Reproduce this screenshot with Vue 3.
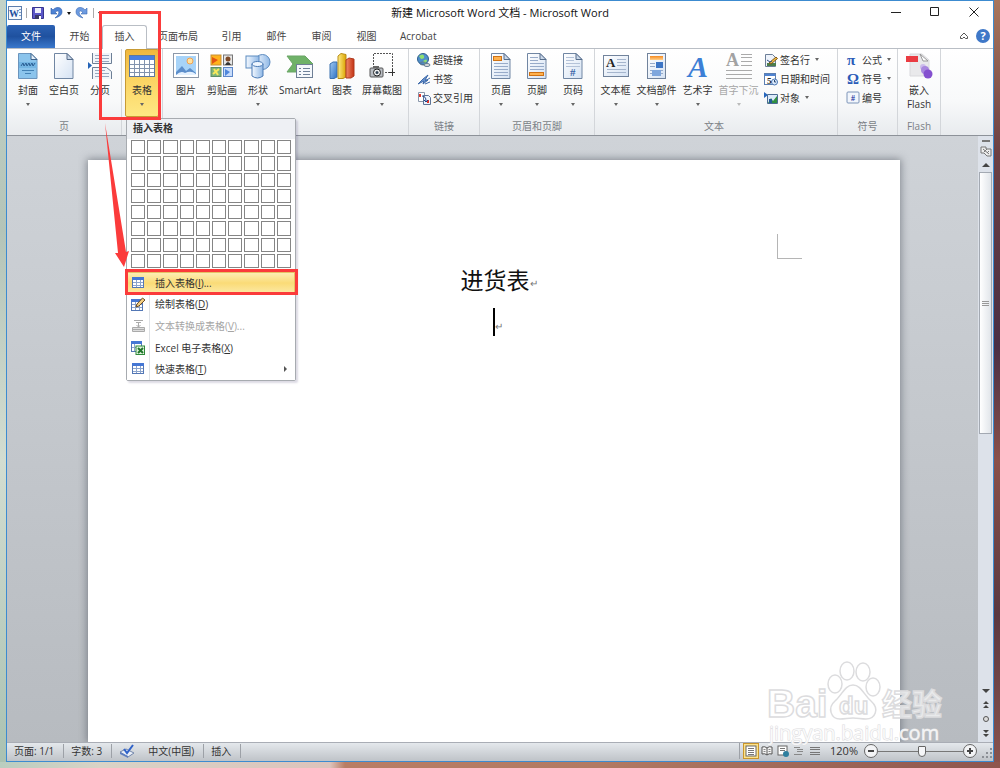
<script setup>
import {ref} from "vue";

const tabs = ['开始', '插入', '页面布局', '引用', '邮件', '审阅', '视图', 'Acrobat']
const active_tab = ref('插入')
const zoom = ref(52)

const groups = [
  {
    id: 'pages', title: '页',
    big: [
      {icon: 'cover', label: '封面', arrow: true},
      {icon: 'page', label: '空白页'},
      {icon: 'break', label: '分页'},
    ],
  },
  {
    id: 'tables', title: '',
    big: [{icon: 'table', label: '表格', arrow: true, open: true}],
  },
  {
    id: 'pictures', title: '插图',
    big: [
      {icon: 'picture', label: '图片'},
      {icon: 'clipart', label: '剪贴画'},
      {icon: 'shapes', label: '形状', arrow: true},
      {icon: 'smartart', label: 'SmartArt', size: 'large'},
      {icon: 'chart', label: '图表'},
      {icon: 'screenshot', label: '屏幕截图', arrow: true, size: 'wide'},
    ],
  },
  {
    id: 'links', title: '链接',
    small: [
      {icon: 'globe', label: '超链接'},
      {icon: 'bookmark', label: '书签'},
      {icon: 'crossref', label: '交叉引用'},
    ],
  },
  {
    id: 'headers', title: '页眉和页脚',
    big: [
      {icon: 'header', label: '页眉', arrow: true},
      {icon: 'footer', label: '页脚', arrow: true},
      {icon: 'pagenum', label: '页码', arrow: true},
    ],
  },
  {
    id: 'text', title: '文本',
    big: [
      {icon: 'textbox', label: '文本框', arrow: true, size: 'wide'},
      {icon: 'parts', label: '文档部件', arrow: true, size: 'wide'},
      {icon: 'wordart', label: '艺术字', arrow: true, size: 'wide'},
      {icon: 'dropcap', label: '首字下沉', arrow: true, size: 'wide', disabled: true},
    ],
    small: [
      {icon: 'sign', label: '签名行', arrow: true},
      {icon: 'date', label: '日期和时间'},
      {icon: 'object', label: '对象', arrow: true},
    ],
  },
  {
    id: 'symbols', title: '符号',
    small: [
      {icon: 'pi', label: '公式', arrow: true},
      {icon: 'omega', label: '符号', arrow: true},
      {icon: 'number', label: '编号'},
    ],
  },
  {
    id: 'flash', title: 'Flash',
    big: [{icon: 'flash', label: '嵌入', second: 'Flash'}],
  },
]

// letters that sit on top of an icon
const glyphs = {
  pagenum: {x: 11, y: 23, text: '#'},
  textbox: {x: 4, y: 14, text: 'A'},
  wordart: {x: 4, y: 24, text: 'A'},
  dropcap: {x: 1, y: 13, text: 'A'},
  date: {x: 3, y: 12, text: '5'},
  pi: {x: 1, y: 12, text: 'π'},
  omega: {x: 1, y: 12, text: 'Ω'},
  number: {x: 5, y: 10, text: '#'},
}

const menu = [
  {icon: 'grid', label: '插入表格', key: 'I', tail: '...', hover: true},
  {icon: 'draw', label: '绘制表格', key: 'D', tail: ''},
  {icon: 'convert', label: '文本转换成表格', key: 'V', tail: '...', disabled: true},
  {icon: 'excel', label: 'Excel 电子表格', key: 'X', tail: ''},
  {icon: 'grid', label: '快速表格', key: 'T', tail: '', sub: true},
]

const views = [
  {icon: 'v-print', label: '页面视图'},
  {icon: 'v-read', label: '阅读版式'},
  {icon: 'v-web', label: 'Web 版式'},
  {icon: 'v-outline', label: '大纲'},
  {icon: 'v-draft', label: '草稿'},
]
</script>

<template>
  <div class="desktop">
    <!-- icon sprite -->
    <svg class="sprite" aria-hidden="true">
      <defs>
        <linearGradient id="g-page" x1="0" y1="0" x2="1" y2="1">
          <stop offset="0" stop-color="#fff"/><stop offset="1" stop-color="#d5e2f3"/>
        </linearGradient>
        <linearGradient id="g-blue" x1="0" y1="0" x2="1" y2="1">
          <stop offset="0" stop-color="#9fc8f2"/><stop offset="1" stop-color="#2f72c4"/>
        </linearGradient>
        <linearGradient id="g-orange" x1="0" y1="0" x2="0" y2="1">
          <stop offset="0" stop-color="#f58a1f"/><stop offset="1" stop-color="#ffd08a"/>
        </linearGradient>
        <linearGradient id="g-shape" x1="0" y1="0" x2="1" y2="0">
          <stop offset="0" stop-color="#f4f9ff"/><stop offset="1" stop-color="#8fb8e6"/>
        </linearGradient>
        <linearGradient id="g-red" x1="0" y1="0" x2="1" y2="0">
          <stop offset="0" stop-color="#f08a68"/><stop offset="1" stop-color="#c33214"/>
        </linearGradient>
        <linearGradient id="g-yellow" x1="0" y1="0" x2="1" y2="0">
          <stop offset="0" stop-color="#fdeb86"/><stop offset="1" stop-color="#dba400"/>
        </linearGradient>
      </defs>
      <symbol id="page" viewBox="0 0 26 26">
        <path d="M3.500.5h12.500l6 6v19h-18.500z" fill="url(#g-page)" stroke="#7086a3"/>
        <path d="M16 .5v6h6z" fill="#c9d7e8" stroke="#566d8b"/>
      </symbol>
      <symbol id="cover" viewBox="0 0 26 26">
        <path d="M3.500.5h12.500l6 6v19h-18.500z" fill="#8bc4ec" stroke="#6a94bd"/>
        <path d="M16 .5v6h6z" fill="#e3f0fb" stroke="#3f6289"/>
        <path d="M4 9h18v6H4z" fill="#74b5e3"/>
        <path d="M6 13l2-3 1 3 2-3 1 3 2-3 1 3 2-3 1 3 2-3" stroke="#2b5f95" fill="none"/>
        <path d="M7 17.500h12M10 20.500h6" stroke="#4482b5"/>
      </symbol>
      <symbol id="break" viewBox="0 0 26 26">
        <path d="M5.500 0v10.500h19V0" fill="#f1f5fa" stroke="#6d7f96"/>
        <path d="M5.500 26V14.500h14l5 4V26" fill="#f1f5fa" stroke="#6d7f96"/>
        <path d="M8 2.500h14M8 5.500h14M8 8.500h14M8 17.500h10M8 20.500h14M8 23.500h14" stroke="#98a8bf"/>
        <path d="M1 9l4 3.500L1 16z" fill="#2464b8"/>
      </symbol>
      <symbol id="table" viewBox="0 0 26 26">
        <rect x=".5" y="2.500" width="25" height="21" fill="#fff" stroke="#5d789e"/>
        <rect x="1" y="3" width="24" height="4" fill="#4a7fe0"/>
        <path d="M1 11.500h24M1 15.500h24M1 19.500h24M5.500 7v16M10.500 7v16M15.500 7v16M20.500 7v16" stroke="#8293ae"/>
      </symbol>
      <symbol id="picture" viewBox="0 0 26 26">
        <rect x=".5" y=".5" width="25" height="24" fill="#fff" stroke="#8c98a9"/>
        <rect x="3" y="3" width="20" height="19" fill="#a7d3f8"/>
        <circle cx="17" cy="8" r="3" fill="#ffe2a0" stroke="#f0a250"/>
        <path d="M3 19l6-6 4 5 4-3 6 5v2H3z" fill="#5c8ecb"/>
        <path d="M3 22q5-5 9-2 6-3 11 1v1z" fill="#e4f1ff"/>
      </symbol>
      <symbol id="clipart" viewBox="0 0 26 26">
        <rect x="2" y="2" width="10" height="10" fill="#ffb21c" stroke="#c58f36"/>
        <path d="M3 4l6 3-6 4z" fill="#e25513"/>
        <rect x="14.500" y="2" width="9" height="10" fill="#e6e6e6" stroke="#777"/>
        <circle cx="19" cy="6" r="2.500" fill="#7f4a28"/><path d="M16 12q3-6 6 0" fill="#333"/>
        <rect x="2" y="14.500" width="10" height="9" fill="#7fb47a" stroke="#5d8c65"/>
        <path d="M4 21l6-5M5 16l4 6" stroke="#f8e85a" stroke-width="2"/>
        <rect x="14.500" y="14.500" width="9" height="9" fill="#c7dcfa" stroke="#5c86c9"/>
        <path d="M16 16l5 3-5 4z" fill="#4f86dc"/>
      </symbol>
      <symbol id="shapes" viewBox="0 0 26 26">
        <circle cx="17.500" cy="9" r="7.500" fill="url(#g-shape)" stroke="#5d8bc0"/>
        <rect x="1" y="3" width="13" height="12" fill="url(#g-shape)" stroke="#5d8bc0"/>
        <path d="M7 11v12q5.500 4 11 0V11" fill="url(#g-shape)" stroke="#4a7ab5"/>
        <ellipse cx="12.500" cy="11" rx="5.500" ry="2.500" fill="#eef6ff" stroke="#4a7ab5"/>
      </symbol>
      <symbol id="smartart" viewBox="0 0 28 26">
        <path d="M1 3h18l8 8-8 8H1l6-8z" fill="#6fb268" stroke="#6aa566"/>
        <rect x="10.500" y="11.500" width="16" height="13" fill="#f5f8fc" stroke="#6e7f95"/>
        <path d="M13 15.500h2M17 15.500h7M13 18.500h2M17 18.500h7M13 21.500h2M17 21.500h7" stroke="#6f8199"/>
      </symbol>
      <symbol id="chart" viewBox="0 0 26 26">
        <path d="M1 11l3-2h4v15l-3 1.500H1z" fill="url(#g-blue)" stroke="#3a70ae"/>
        <path d="M9 3l3-2.500 5 1V24l-3 1.500H9z" fill="url(#g-yellow)" stroke="#b98d16"/>
        <path d="M17 7l3-2 5 1v17l-3 2h-5z" fill="url(#g-red)" stroke="#b03a1e"/>
      </symbol>
      <symbol id="screenshot" viewBox="0 0 26 26">
        <path d="M4.500 12V.5h19v18M16 19.500h5" stroke="#555" fill="none" stroke-dasharray="2 1"/>
        <path d="M20 19.500h6M23.500 16v7" stroke="#333"/>
        <rect x="1" y="15" width="13" height="9" rx="1" fill="#b9bdc3" stroke="#555"/>
        <rect x="4" y="13" width="6" height="2" fill="#666"/>
        <circle cx="8" cy="19.500" r="3.500" fill="#eee" stroke="#222"/><circle cx="8" cy="19.500" r="1.500" fill="#345"/>
      </symbol>
      <symbol id="header" viewBox="0 0 26 26">
        <use href="#page"/>
        <rect x="5.500" y="3.500" width="8" height="4" fill="#ffb14e" stroke="#cf7215"/>
        <path d="M6 10.500h14M6 13.500h14M6 16.500h14M6 19.500h14M6 22.500h14" stroke="#98abc9"/>
      </symbol>
      <symbol id="footer" viewBox="0 0 26 26">
        <use href="#page"/>
        <path d="M6 4.500h8M6 7.500h8M6 10.500h14M6 13.500h14M6 16.500h14" stroke="#98abc9"/>
        <rect x="5.500" y="19.500" width="14" height="3" fill="#ffb14e" stroke="#cf7215"/>
      </symbol>
      <symbol id="pagenum" viewBox="0 0 26 26">
        <use href="#page"/>
        <path d="M6 4.500h8M6 7.500h8M6 10.500h14M6 13.500h14" stroke="#b4c2d8"/>
      </symbol>
      <symbol id="textbox" viewBox="0 0 26 26">
        <rect x=".5" y="2.500" width="25" height="21" fill="url(#g-page)" stroke="#71839c"/>
        <path d="M14 6.500h9M14 9.500h9M14 12.500h9M4 16.500h19M4 19.500h19" stroke="#a5b5cd"/>
      </symbol>
      <symbol id="parts" viewBox="0 0 26 26">
        <rect x="3.500" y=".5" width="18" height="25" fill="url(#g-page)" stroke="#71839c"/>
        <rect x="6" y="3" width="13" height="4" fill="url(#g-orange)"/>
        <path d="M6 10.500h5M6 13.500h5M6 17.500h13M6 20.500h13" stroke="#98abc9"/>
        <rect x="12" y="9" width="7" height="6" fill="#3d75c5"/>
        <rect x="8" y="17" width="9" height="6" fill="#7fa7dd"/>
      </symbol>
      <symbol id="dropcap" viewBox="0 0 26 26">
        <path d="M15 1.500h11M15 4.500h11M15 8.500h11M15 12.500h11M0 17.500h26M0 21.500h26M0 25.500h26" stroke="#aaa"/>
      </symbol>
      <symbol id="flash" viewBox="0 0 28 26">
        <path d="M5 1h12l7 6v16H5z" fill="#e9e9eb" stroke="#d9d9dc"/>
        <path d="M15 1l8 7h-5z" fill="#fff" stroke="#999"/>
        <rect x="1" y="3" width="12" height="6" fill="#ea3c42"/>
        <circle cx="18" cy="14" r="3" fill="#cdbcec"/><circle cx="20" cy="17" r="4" fill="#a887de"/>
        <circle cx="23" cy="21" r="4.500" fill="#8450cf"/>
      </symbol>

      <symbol id="globe" viewBox="0 0 14 14">
        <circle cx="6" cy="6" r="5.500" fill="#4f8fcb" stroke="#2e5f8e"/>
        <path d="M2 3q4-3 5 0t-3 3zM6 8q4-3 4 0l-2 3z" fill="#8fe070"/>
        <ellipse cx="6" cy="10.500" rx="3" ry="1.500" fill="none" stroke="#617991"/>
        <ellipse cx="10" cy="12" rx="3" ry="1.500" fill="#ddd" stroke="#617991"/>
      </symbol>
      <symbol id="bookmark" viewBox="0 0 14 14">
        <path d="M1 12l5-5 5-4-3 5h3l-5 4 1-3z" fill="#6b95d0" stroke="#3c68a8"/>
        <path d="M8 9l5-3M8 12l5-2" stroke="#3c68a8"/>
      </symbol>
      <symbol id="crossref" viewBox="0 0 14 14">
        <path d="M1.500 1.500h6v9h-6z" fill="#fff" stroke="#8a97aa"/>
        <path d="M6.500 4.500h5l2 2v7h-7z" fill="#eef3fb" stroke="#5d7496"/>
        <path d="M3 3v3M11 9v3" stroke="#e0362b" stroke-width="2"/>
        <path d="M5 5q4 0 4 5M7 9l2 2 2-2" stroke="#1d3f86" fill="none"/>
      </symbol>
      <symbol id="sign" viewBox="0 0 14 14">
        <path d="M1.500 1.500h7l3 3v9h-10z" fill="#eef3fb" stroke="#6c7f98"/>
        <path d="M3 10h9v3H3z" fill="#4b7d4c"/>
        <path d="M5 10l7-6 1.500 1.500L7 11z" fill="#f2bd45" stroke="#80581a"/>
        <path d="M3 7l3 2 2-1" stroke="#2c4f8a" fill="none"/>
      </symbol>
      <symbol id="date" viewBox="0 0 14 14">
        <rect x=".5" y="1.500" width="11" height="11" fill="#fff" stroke="#5c7fb2"/>
        <path d="M1 2h10v2H1z" fill="#4f83d1"/>
        <circle cx="10.500" cy="10" r="3" fill="#dceafb" stroke="#4a76b3"/><path d="M10.500 8v2h1.500" stroke="#26466f" fill="none"/>
      </symbol>
      <symbol id="object" viewBox="0 0 14 14">
        <path d="M0 1l4 3-4 3z" fill="#2767bd"/>
        <path d="M3.500 3.500h10v9h-10z" fill="#dceafb" stroke="#4c6c93"/>
        <path d="M4 12l3-5 2 3 4-5v7z" fill="#2f8f41"/><path d="M5 8h3v4H5z" fill="#245b96"/>
      </symbol>
      <symbol id="number" viewBox="0 0 14 14">
        <rect x="1" y="1" width="12" height="11" rx="1" fill="#f2f6fc" stroke="#7d94b8"/>
      </symbol>

      <symbol id="grid" viewBox="0 0 14 14">
        <rect x="1.500" y="1.500" width="11" height="10" fill="#fff" stroke="#5377b5"/>
        <path d="M1 1h12v3H1z" fill="#4577d4"/>
        <path d="M2 6.500h10M2 9.500h10M5.500 4v7M9.500 4v7" stroke="#8ba4cc"/>
      </symbol>
      <symbol id="draw" viewBox="0 0 14 14">
        <rect x=".5" y="2.500" width="11" height="11" fill="#fff" stroke="#5377b5"/>
        <path d="M0 2h12v3H0z" fill="#4577d4"/>
        <path d="M1 7.500h10M1 10.500h10M4.500 5v8M8.500 5v8" stroke="#8ba4cc"/>
        <path d="M5 10l1-3 5.500-6L14 3l-6 6z" fill="#f4cf82" stroke="#6b4c26"/>
      </symbol>
      <symbol id="convert" viewBox="0 0 14 14">
        <path d="M3 1.500h9M5 3.500h5M7.500 4v4M5.500 6l2 2 2-2" stroke="#aaa" fill="none"/>
        <path d="M1.500 8.500h12v4h-12zM1 10.500h12" stroke="#aaa" fill="#ddd"/>
      </symbol>
      <symbol id="excel" viewBox="0 0 14 14">
        <rect x=".5" y=".5" width="10" height="10" fill="#fff" stroke="#5377b5"/>
        <path d="M0 0h11v3H0z" fill="#4577d4"/><path d="M3.500 3v7M1 6.500h9" stroke="#8ba4cc"/>
        <rect x="5" y="5" width="8.500" height="8.500" fill="#e3f4e0" stroke="#2f8a3a"/>
        <path d="M7 7l5 5M12 7l-5 5" stroke="#20762b" stroke-width="2"/>
      </symbol>

      <symbol id="save" viewBox="0 0 14 14">
        <path d="M1.500 1.500h11v11h-11z" fill="#5b57c8" stroke="#37358f"/>
        <path d="M4 2h6v5H4z" fill="#eef0fb"/><path d="M4 9h6v4H4z" fill="#3a3a66"/><path d="M8 10h2v3H8z" fill="#fff"/>
      </symbol>
      <symbol id="undo" viewBox="0 0 14 14">
        <path d="M2 2v6h6L6 6q3-2 4 0 0 3-4 6 7-2 7-6 0-5-5-4.500Q5 2 4 4z" fill="#4d82d4" stroke="#2d5ca8" stroke-width=".6"/>
      </symbol>
      <symbol id="redo" viewBox="0 0 14 14">
        <path d="M12 2v6H6l2-2q-3-2-4 0 0 3 4 6-7-2-7-6 0-5 5-4.500Q9 2 10 4z" fill="#6d9be0" stroke="#3a69b3" stroke-width=".6"/>
      </symbol>
      <symbol id="proof" viewBox="0 0 16 14">
        <path d="M1 8l6-3 8 4-6 4z" fill="#e9eef7" stroke="#7286ab"/><path d="M1 8l8 4v2L1 10z" fill="#5f7fbf"/>
        <path d="M5 5l3 4 6-8" stroke="#2f62c9" stroke-width="2" fill="none"/>
      </symbol>
      <symbol id="v-print" viewBox="0 0 12 12">
        <rect x="1" y="1" width="10" height="10" fill="#fff" stroke="#666"/><path d="M3 3.500h6M3 5.500h6M3 7.500h6M3 9.500h6" stroke="#777"/>
      </symbol>
      <symbol id="v-read" viewBox="0 0 12 12">
        <path d="M1 2q3-1 5 1 2-2 5-1v7q-3-1-5 1-2-2-5-1zM6 3v7" fill="#f5f5f5" stroke="#555"/>
        <path d="M2.500 4.500h2M2.500 6.500h2M7.500 4.500h2M7.500 6.500h2" stroke="#888"/>
      </symbol>
      <symbol id="v-web" viewBox="0 0 12 12">
        <rect x="1" y="1" width="9" height="9" fill="#fff" stroke="#666"/><path d="M3 3.500h5M3 5.500h5" stroke="#777"/>
        <circle cx="9" cy="9" r="3" fill="#2f7f9f"/>
      </symbol>
      <symbol id="v-outline" viewBox="0 0 12 12">
        <path d="M1 2.500h6M4 4.500h6M4 6.500h6M1 9.500h8" stroke="#888"/>
      </symbol>
      <symbol id="v-draft" viewBox="0 0 12 12">
        <path d="M1 2.500h10M1 4.500h10M1 7.500h10M1 9.500h10" stroke="#777"/>
      </symbol>
    </svg>

    <div class="window">
      <header class="titlebar">
        <div class="quick">
          <svg class="ic14" viewBox="0 0 14 14">
            <rect x=".5" y=".5" width="13" height="13" fill="#f4f8fd" stroke="#5c7ead"/>
            <path d="M11 3.500h2M11 6.500h2M11 9.500h2" stroke="#7c9ac4"/>
            <text x="1" y="11" class="glyph word">W</text>
          </svg>
          <i class="bar"></i>
          <button aria-label="保存"><svg class="ic14"><use href="#save"/></svg></button>
          <button aria-label="撤消"><svg class="ic14"><use href="#undo"/></svg></button>
          <i class="arrow dark"></i>
          <button aria-label="恢复"><svg class="ic14"><use href="#redo"/></svg></button>
          <i class="bar"></i>
          <i class="arrow dark"></i>
        </div>
        <h1>新建 Microsoft Word 文档 - Microsoft Word</h1>
        <div class="controls">
          <button aria-label="最小化"><svg viewBox="0 0 10 10"><path d="M0 5.500h10" stroke="#222"/></svg></button>
          <button aria-label="最大化"><svg viewBox="0 0 10 10"><path d="M.5.5h8v8h-8z" fill="none" stroke="#222"/></svg></button>
          <button aria-label="关闭"><svg viewBox="0 0 10 10"><path d="M.5.5l9 9M9.500.5l-9 9" stroke="#222"/></svg></button>
        </div>
      </header>

      <nav class="tabs">
        <button class="file">文件</button>
        <button v-for="tab in tabs" :key="tab" class="tab" :class="{active: tab === active_tab}"
                @click="active_tab = tab">{{ tab }}</button>
        <div class="help">
          <svg class="caret" viewBox="0 0 10 8"><path d="M1.500 4.500L5 1l3.500 3.500v2H6.500L5 5 3.500 6.500h-2z" fill="#fff" stroke="#555"/></svg>
          <button aria-label="帮助">?</button>
        </div>
      </nav>

      <section class="ribbon">
        <div v-for="group in groups" :key="group.id" class="group" :class="group.id">
          <div class="items">
            <button v-for="item in group.big" :key="item.label" class="big" :disabled="item.disabled"
                    :class="[item.size, {open: item.open}]">
              <svg class="ic26">
                <use :href="'#' + item.icon"/>
                <text v-if="glyphs[item.icon]" class="glyph" :class="item.icon"
                      :x="glyphs[item.icon].x" :y="glyphs[item.icon].y">{{ glyphs[item.icon].text }}</text>
              </svg>
              <span>{{ item.label }}</span>
              <span v-if="item.second">{{ item.second }}</span>
              <i v-if="item.arrow" class="arrow"></i>
            </button>
            <div v-if="group.small" class="list">
              <button v-for="item in group.small" :key="item.label" class="small">
                <svg class="ic14">
                  <use :href="'#' + item.icon"/>
                  <text v-if="glyphs[item.icon]" class="glyph" :class="item.icon"
                        :x="glyphs[item.icon].x" :y="glyphs[item.icon].y">{{ glyphs[item.icon].text }}</text>
                </svg>
                <span>{{ item.label }}</span>
                <i v-if="item.arrow" class="arrow"></i>
              </button>
            </div>
          </div>
          <div class="title">{{ group.title }}</div>

          <div v-if="group.id === 'tables'" class="dropdown">
            <h2>插入表格</h2>
            <div class="cells">
              <button v-for="n in 80" :key="n" :aria-label="`${(n - 1) % 10 + 1} x ${Math.ceil(n / 10)}`"></button>
            </div>
            <div class="menu">
              <button v-for="item in menu" :key="item.key" :class="{hover: item.hover}" :disabled="item.disabled">
                <svg class="ic14"><use :href="'#' + item.icon"/></svg>
                <span>{{ item.label }}(<u>{{ item.key }}</u>){{ item.tail }}</span>
                <i v-if="item.sub" class="sub"></i>
              </button>
            </div>
          </div>
        </div>
      </section>

      <main class="workspace">
        <article class="page">
          <div class="corner"></div>
          <p class="heading">进货表<span class="mark">↵</span></p>
          <p class="line"><i class="cursor"></i><span class="mark">↵</span></p>
        </article>
        <div class="scroll">
          <i class="split"></i>
          <svg class="ruler" viewBox="0 0 12 12"><path d="M1 2h5v2h5v7H7L4 8H1zM3 4l6 5M4 7l3-3M7 8l2-2" fill="#eee" stroke="#777"/></svg>
          <i class="up"></i>
          <div class="thumb"><i></i></div>
          <div class="track"></div>
          <i class="down"></i>
          <svg class="jump" viewBox="0 0 8 44">
            <path d="M4 3l3 3H1zM4 7l3 3H1zM4 39l3-3H1zM4 35l3-3H1z" fill="#444"/>
            <circle cx="4" cy="21" r="2.500" fill="#ddd" stroke="#555"/>
          </svg>
        </div>
      </main>

      <footer class="status">
        <span class="cell">页面: 1/1</span>
        <span class="cell">字数: 3</span>
        <span class="cell lang"><svg class="ic16"><use href="#proof"/></svg>中文(中国)</span>
        <span class="cell">插入</span>
        <div class="right">
          <button v-for="(view, i) in views" :key="view.icon" class="view" :class="{on: i === 0}" :aria-label="view.label">
            <svg><use :href="'#' + view.icon"/></svg>
          </button>
          <span class="percent">120%</span>
          <button class="round" aria-label="缩小"><svg viewBox="0 0 12 12"><path d="M3 6h6" stroke="#444" stroke-width="2"/></svg></button>
          <input v-model="zoom" type="range" min="0" max="100" aria-label="显示比例">
          <button class="round" aria-label="放大"><svg viewBox="0 0 12 12"><path d="M3 6h6M6 3v6" stroke="#444" stroke-width="2"/></svg></button>
          <svg class="grip" viewBox="0 0 10 10"><path d="M8 0h2v2H8zM8 4h2v2H8zM8 8h2v2H8zM4 4h2v2H4zM4 8h2v2H4zM0 8h2v2H0z" fill="#8b8f95"/></svg>
        </div>
      </footer>
    </div>

    <!-- red hints over the window -->
    <svg class="hints" viewBox="0 0 300 300">
      <rect x="100.500" y="12.500" width="59" height="106" fill="none" stroke="#fb3b3b" stroke-width="3"/>
      <rect x="126.500" y="270.500" width="170" height="23" fill="none" stroke="#fb3b3b" stroke-width="3"/>
      <path d="M105 123L118 253L115 253L124 267L129 251L126 252z" fill="#fb3b3b"/>
    </svg>

    <svg class="watermark" viewBox="0 0 190 90">
      <g fill="#fff" fill-opacity=".7" stroke="#dcdcde" stroke-width="1.500">
        <ellipse cx="79" cy="24" rx="7" ry="9"/>
        <ellipse cx="91" cy="11" rx="7" ry="9"/>
        <ellipse cx="107" cy="12" rx="7" ry="9"/>
        <ellipse cx="117" cy="27" rx="7" ry="9"/>
        <path d="M97 25c8 0 11 10 18 16 9 8 4 18-5 18-5 0-8-1-13-1s-8 1-13 1c-9 0-13-11-5-18 7-6 10-16 18-16z"/>
        <text x="11" y="57" class="bai">Bai</text>
        <text x="83" y="54" class="du">du</text>
        <text x="126" y="55" class="jy">经验</text>
      </g>
      <text x="13" y="80" class="url">jingyan.baidu.com</text>
    </svg>
  </div>
</template>

<style>
body {
  margin: 0;
}
</style>

<style scoped>
.desktop {
  position: relative;
  box-sizing: border-box;
  min-height: 100vh;
  padding: 0 6px 6px;
  display: flex;
  overflow: hidden;
  font-family: "Open Sans", "Noto Sans CJK SC", sans-serif;
  font-size: 10px;
  line-height: 14px;
  color: #333;
  background:
    linear-gradient(90deg, #b9cdbf 0, #d9d3c6 100px, #ddc3bb 330px, #b97d65 345px, #b27a63 60%, #8e564e) bottom / 100% 6px no-repeat,
    linear-gradient(#a9765c, #6c4043 20%, #4a2f44 45%, #8a5049 60%, #5a3840 80%, #8a544e) right / 6px 100% no-repeat,
    linear-gradient(#c3d3c8, #b4c4b8 30%, #d3ddd1 60%, #a9c1b1);
}

.sprite {
  position: absolute;
  width: 0;
  height: 0;
}

button {
  padding: 0;
  border: 0;
  background: none;
  font: inherit;
  color: inherit;
}

button:disabled {
  color: #a5a5a5;
}

.window {
  flex: 1;
  min-width: 0;
  display: flex;
  flex-direction: column;
  border: 1px solid #3c8bd0;
  background: #fff;
}

.ic14 {
  flex: none;
  width: 14px;
  height: 14px;
  overflow: visible;
}

.ic16 {
  width: 16px;
  height: 14px;
}

.ic26 {
  width: 28px;
  height: 26px;
  overflow: visible;
}

.arrow {
  border: 2px solid transparent;
  border-top: 3px solid #666;
  border-bottom: 0;
}

.arrow.dark {
  border-top-color: #111;
}

.glyph {
  font-family: "Liberation Serif", serif;
  font-weight: bold;
}

.pagenum {
  font-size: 11px;
  fill: #3b66a8;
}

.textbox {
  font-size: 13px;
  fill: #222;
}

.wordart {
  font-size: 30px;
  font-style: italic;
  fill: #3c7fd6;
}

.dropcap {
  font-size: 18px;
  fill: #a2a2a2;
}

.date {
  font-size: 9px;
  fill: #222;
}

.pi,
.omega {
  font-size: 15px;
  fill: #2a5bb8;
}

.number {
  font-size: 8px;
  fill: #1b2f9c;
}

.word {
  font-size: 10px;
  fill: #1f4e9c;
}

/* title bar */
.titlebar {
  display: grid;
  grid-template-columns: 1fr auto 1fr;
  align-items: center;
  height: 24px;
}

.titlebar h1 {
  margin: 0;
  font-size: 11px;
  font-weight: normal;
  color: #111;
}

.quick {
  display: flex;
  align-items: center;
  gap: 4px;
  padding-left: 1px;
}

.quick button {
  height: 14px;
}

.bar {
  width: 1px;
  height: 10px;
  background: #aaa;
}

.controls {
  display: flex;
  justify-content: flex-end;
}

.controls button {
  width: 39px;
  height: 24px;
}

.controls svg {
  width: 10px;
  height: 10px;
}

/* tabs */
.tabs {
  display: flex;
  height: 23px;
  border-bottom: 1px solid #b9bec5;
}

.file {
  width: 48px;
  margin-right: 2px;
  padding-bottom: 2px;
  border-radius: 2px 2px 0 0;
  background: linear-gradient(#2c62b4, #1f519f 50%, #3a78cc);
  color: #fff;
}

.tab {
  box-sizing: border-box;
  min-width: 45px;
  padding: 0 11px 2px;
  color: #444;
}

.tab.active {
  margin-bottom: -1px;
  padding-bottom: 4px;
  border: 1px solid #b9bec5;
  border-bottom: 0;
  border-radius: 3px 3px 0 0;
  background: #fff;
}

.help {
  display: flex;
  align-items: center;
  gap: 5px;
  margin-left: auto;
  padding: 0 3px 2px 0;
}

.caret {
  width: 10px;
  height: 8px;
  margin-right: 2px;
}

.help button {
  width: 14px;
  height: 14px;
  border-radius: 50%;
  background: #3f78c8;
  color: #fff;
  font-size: 11px;
  font-weight: bold;
  line-height: 14px;
}

/* ribbon */
.ribbon {
  display: flex;
  height: 86px;
  border-bottom: 1px solid #8d9299;
  background: linear-gradient(#fff, #f8f9fa 60%, #e8ebee);
}

.group {
  position: relative;
  display: flex;
  flex-direction: column;
  padding: 0 3px;
  border-right: 1px solid #d3d6da;
}

.items {
  flex: 1;
  display: flex;
}

.title {
  height: 16px;
  text-align: center;
  color: #7b7f86;
}

.big {
  display: flex;
  flex-direction: column;
  align-items: center;
  width: 36px;
  height: 68px;
  padding-top: 4px;
  white-space: nowrap;
}

.big span {
  margin-top: 4px;
}

.big span + span {
  margin-top: 0;
}

.big .arrow {
  margin-top: 6px;
}

.big.large {
  width: 48px;
}

.big.wide {
  width: 41px;
}

.pictures .wide {
  width: 44px;
}

.big:disabled .arrow {
  border-top-color: #bbb;
}

.big.open {
  width: 34px;
  border: 1px solid #c79a35;
  border-radius: 2px;
  padding-top: 3px;
  background: linear-gradient(#f0b73c, #fbd260 40%, #fee884);
}

.list {
  display: flex;
  flex-direction: column;
  padding: 1px 3px 1px 5px;
}

.pictures {
  padding: 0 4px 0 5px;
}

.text {
  padding: 0 4px 0 0;
}

.small {
  display: flex;
  align-items: center;
  gap: 2px;
  height: 19px;
  white-space: nowrap;
}

.small .arrow {
  margin-left: 3px;
}

/* table drop-down */
.dropdown {
  position: absolute;
  z-index: 2;
  top: 69px;
  left: 4px;
  box-sizing: border-box;
  width: 170px;
  border: 1px solid #a7abb0;
  border-radius: 2px;
  background: #fff;
  box-shadow: 2px 2px 2px rgba(80, 70, 120, 0.2);
}

.dropdown h2 {
  margin: 0;
  padding: 2px 6px 3px;
  background: #eef0f4;
  font-size: 10px;
  line-height: 15px;
}

.cells {
  display: grid;
  grid-template-columns: repeat(10, 1fr);
  grid-template-rows: repeat(8, 1fr);
  gap: 2px;
  height: 128px;
  margin: 1px 4px 4px;
}

.cells button {
  border: 1px solid #858585;
}

.menu {
  display: grid;
  grid-template-rows: repeat(5, 1fr);
  height: 108px;
  background: linear-gradient(90deg, #fff 22px, #dfe2e6 22px, #dfe2e6 23px, #fff 23px);
}

.menu button {
  display: flex;
  align-items: center;
  gap: 10px;
  padding: 0 8px 0 4px;
}

.menu .hover {
  border: 1px solid #e5c365;
  padding-left: 3px;
  background: linear-gradient(#fdeeb3, #fadb77 50%, #fce9a4);
}

.sub {
  margin-left: auto;
  border: 3px solid transparent;
  border-left-color: #555;
  border-right: 0;
}

/* document */
.workspace {
  flex: 1;
  display: flex;
  background: linear-gradient(#cfd3d8, #b7bbc0);
}

.page {
  flex: 1;
  display: flex;
  flex-direction: column;
  align-items: center;
  margin: 24px 78px 0 81px;
  padding-top: 74px;
  background: #fff;
  box-shadow: 0 0 8px 1px rgba(70, 75, 85, 0.55);
  clip-path: inset(-10px -10px 0 -10px);
  font-family: "Noto Sans CJK SC", sans-serif;
  color: #111;
}

.corner {
  align-self: flex-end;
  width: 24px;
  height: 24px;
  margin-right: 98px;
  border-left: 1px solid #b5b5b5;
  border-bottom: 1px solid #b5b5b5;
}

.page p {
  display: flex;
  margin: 0;
}

.heading {
  padding: 4px 0 0 10px;
  font-size: 23px;
  line-height: 32px;
}

.line {
  padding: 13px 0 0 8px;
}

.cursor {
  width: 2px;
  height: 28px;
  background: #000;
}

.mark {
  align-self: center;
  padding-top: 8px;
  font-size: 10px;
  line-height: 10px;
  color: #777;
}

.scroll {
  display: flex;
  flex-direction: column;
  align-items: center;
  width: 15px;
  background: #dde2ea;
}

.split {
  width: 8px;
  height: 2px;
  margin: 4px 0 3px;
  background: #777;
}

.ruler {
  width: 12px;
  height: 12px;
}

.up {
  margin: 6px 0 5px;
  border: 4px solid transparent;
  border-top: 0;
  border-bottom-color: #444;
}

.down {
  margin: 5px 0;
  border: 4px solid transparent;
  border-bottom: 0;
  border-top-color: #444;
}

.thumb {
  flex: 26;
  display: flex;
  align-items: center;
  justify-content: center;
  box-sizing: border-box;
  width: 13px;
  border: 1px solid #a3a9b2;
  background: linear-gradient(90deg, #fff, #e1e5ea);
}

.thumb i {
  width: 7px;
  height: 1px;
  border: 1px solid #999;
  border-width: 1px 0;
  background: #999;
  padding: 1px 0;
  background-clip: content-box;
}

.track {
  flex: 25;
}

.jump {
  width: 8px;
  height: 44px;
}

/* status bar */
.status {
  display: flex;
  align-items: center;
  height: 16px;
  padding-bottom: 2px;
  border-top: 1px solid #a9adb5;
  background: linear-gradient(#e4e8ec, #bfc3c8);
}

.cell {
  display: flex;
  align-items: center;
  padding: 0 9px 0 7px;
  border-right: 1px solid #9da1a7;
}

.lang {
  gap: 13px;
}

.right {
  display: flex;
  align-items: center;
  margin-left: auto;
  padding-left: 3px;
  border-left: 1px solid #9da1a7;
}

.view {
  box-sizing: border-box;
  width: 16px;
  height: 16px;
  line-height: 0;
}

.view svg {
  width: 12px;
  height: 12px;
}

.view.on {
  border: 1px solid #c9962c;
  background: #fde28a;
}

.percent {
  padding: 0 6px 0 7px;
  font-size: 11px;
}

.round {
  width: 14px;
  height: 14px;
  border: 1px solid #666;
  border-radius: 50%;
  background: #f3f4f6;
  line-height: 0;
}

.round svg {
  width: 12px;
  height: 12px;
}

.status input {
  appearance: none;
  width: 85px;
  height: 12px;
  margin: 0;
  background: linear-gradient(#777, #777) center / 100% 1px no-repeat;
}

.status input::-webkit-slider-thumb {
  appearance: none;
  width: 8px;
  height: 11px;
  border: 1px solid #666;
  border-radius: 1px 1px 4px 4px;
  background: #f5f6f8;
}

.grip {
  width: 10px;
  height: 10px;
  margin: 4px 1px 0 5px;
}

/* overlays */
.hints {
  position: absolute;
  z-index: 3;
  top: 0;
  left: 0;
  width: 300px;
  height: 300px;
  pointer-events: none;
}

.watermark {
  position: absolute;
  right: 54px;
  bottom: 18px;
  width: 190px;
  height: 90px;
  pointer-events: none;
}

.bai {
  font: bold 39px "Liberation Sans", sans-serif;
}

.du {
  font: bold 24px "Liberation Sans", sans-serif;
}

.jy {
  font: bold 30px "Noto Sans CJK SC", sans-serif;
}

.url {
  font: 20px "Open Sans", sans-serif;
  fill: #fff;
  fill-opacity: 0.8;
  stroke: #dcdcde;
  stroke-width: 1px;
  paint-order: stroke;
}
</style>
